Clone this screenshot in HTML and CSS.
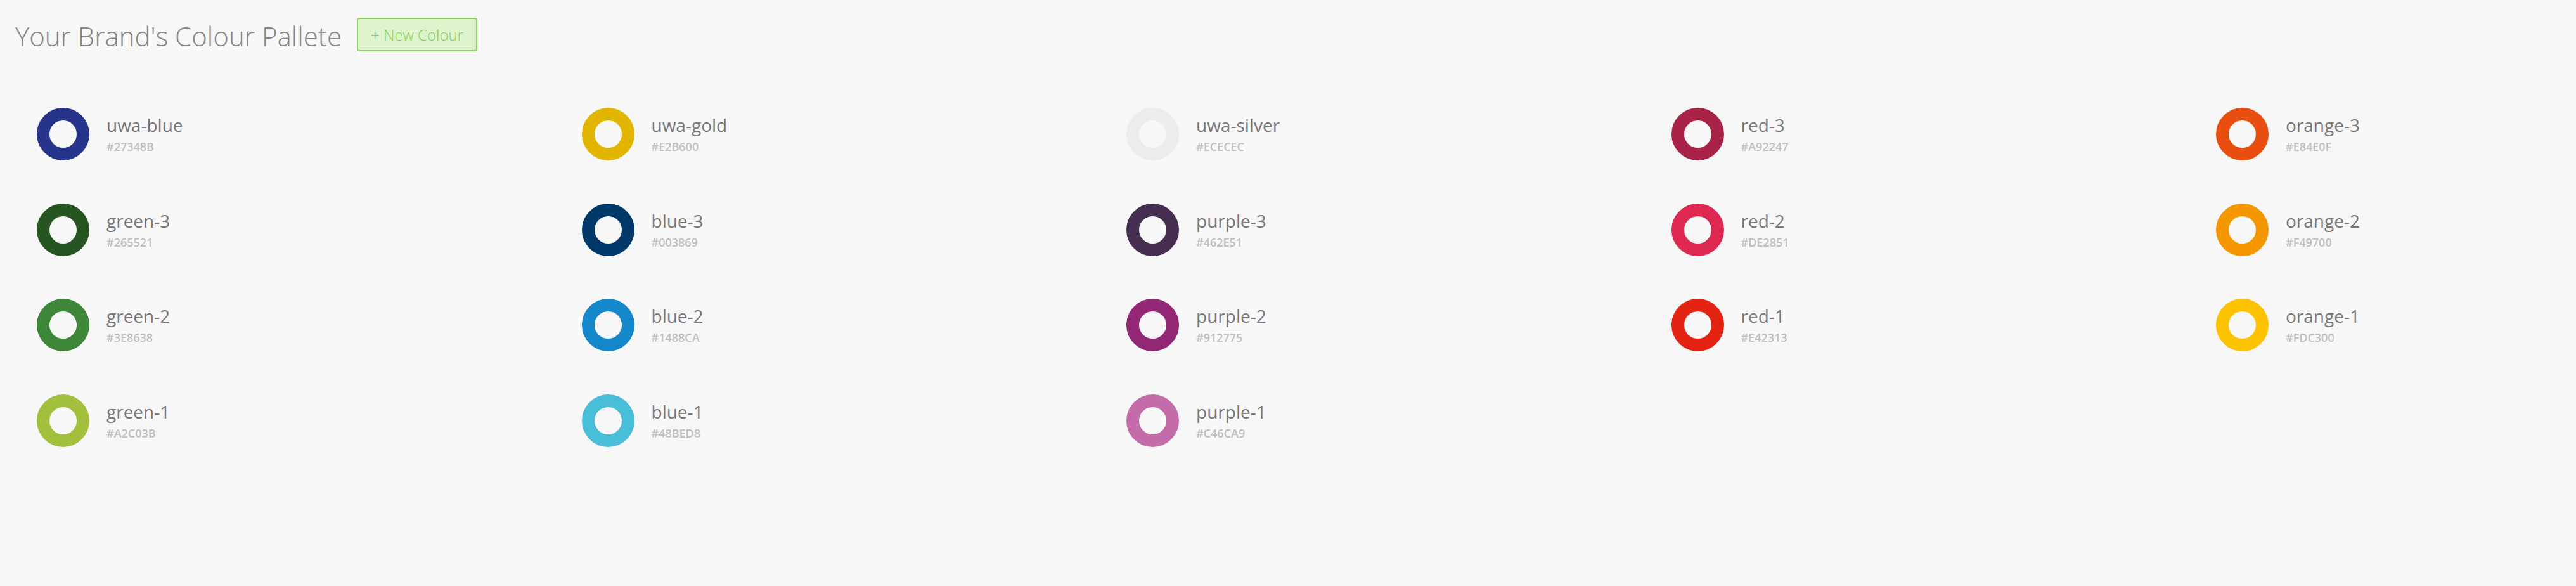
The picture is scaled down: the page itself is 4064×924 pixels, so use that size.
FILE: index.html
```html
<!DOCTYPE html>
<html lang="en">
<head>
<meta charset="utf-8">
<title>Your Brand's Colour Pallete</title>
<link rel="stylesheet" href="styles.css">
</head>
<body>
<header class="header">
  <h1 class="title">Your Brand's Colour Pallete</h1>
  <button class="new-btn" type="button">+ New Colour</button>
</header>
<main class="palette">
  <div class="col">
    <div class="swatch"><span class="ring" style="border-color:#27348B"></span><div class="info"><div class="name">uwa-blue</div><div class="hex">#27348B</div></div></div>
    <div class="swatch"><span class="ring" style="border-color:#265521"></span><div class="info"><div class="name">green-3</div><div class="hex">#265521</div></div></div>
    <div class="swatch"><span class="ring" style="border-color:#3E8638"></span><div class="info"><div class="name">green-2</div><div class="hex">#3E8638</div></div></div>
    <div class="swatch"><span class="ring" style="border-color:#A2C03B"></span><div class="info"><div class="name">green-1</div><div class="hex">#A2C03B</div></div></div>
  </div>
  <div class="col">
    <div class="swatch"><span class="ring" style="border-color:#E2B600"></span><div class="info"><div class="name">uwa-gold</div><div class="hex">#E2B600</div></div></div>
    <div class="swatch"><span class="ring" style="border-color:#003869"></span><div class="info"><div class="name">blue-3</div><div class="hex">#003869</div></div></div>
    <div class="swatch"><span class="ring" style="border-color:#1488CA"></span><div class="info"><div class="name">blue-2</div><div class="hex">#1488CA</div></div></div>
    <div class="swatch"><span class="ring" style="border-color:#48BED8"></span><div class="info"><div class="name">blue-1</div><div class="hex">#48BED8</div></div></div>
  </div>
  <div class="col">
    <div class="swatch"><span class="ring" style="border-color:#ECECEC"></span><div class="info"><div class="name">uwa-silver</div><div class="hex">#ECECEC</div></div></div>
    <div class="swatch"><span class="ring" style="border-color:#462E51"></span><div class="info"><div class="name">purple-3</div><div class="hex">#462E51</div></div></div>
    <div class="swatch"><span class="ring" style="border-color:#912775"></span><div class="info"><div class="name">purple-2</div><div class="hex">#912775</div></div></div>
    <div class="swatch"><span class="ring" style="border-color:#C46CA9"></span><div class="info"><div class="name">purple-1</div><div class="hex">#C46CA9</div></div></div>
  </div>
  <div class="col">
    <div class="swatch"><span class="ring" style="border-color:#A92247"></span><div class="info"><div class="name">red-3</div><div class="hex">#A92247</div></div></div>
    <div class="swatch"><span class="ring" style="border-color:#DE2851"></span><div class="info"><div class="name">red-2</div><div class="hex">#DE2851</div></div></div>
    <div class="swatch"><span class="ring" style="border-color:#E42313"></span><div class="info"><div class="name">red-1</div><div class="hex">#E42313</div></div></div>
  </div>
  <div class="col">
    <div class="swatch"><span class="ring" style="border-color:#E84E0F"></span><div class="info"><div class="name">orange-3</div><div class="hex">#E84E0F</div></div></div>
    <div class="swatch"><span class="ring" style="border-color:#F49700"></span><div class="info"><div class="name">orange-2</div><div class="hex">#F49700</div></div></div>
    <div class="swatch"><span class="ring" style="border-color:#FDC300"></span><div class="info"><div class="name">orange-1</div><div class="hex">#FDC300</div></div></div>
  </div>
</main>
</body>
</html>
```

FILE: styles.css
```css
html, body {
  margin: 0;
  padding: 0;
  background: #f7f7f7;
  overflow: hidden;
}
body {
  font-family: "Open Sans", "Noto Sans", sans-serif;
  width: 4064px;
  height: 924px;
}
.header {
  display: flex;
  align-items: center;
  padding: 28px 0 0 24px;
  height: 53px;
}
.title {
  margin: 0;
  font-weight: 300;
  font-size: 42px;
  line-height: 53px;
  color: #858585;
  white-space: nowrap;
  position: relative;
  top: 2px;
}
.new-btn {
  margin-left: 24px;
  height: 53px;
  padding: 0 20px;
  border: 2px solid #8fd462;
  border-radius: 4px;
  background: #def4cc;
  color: #86cc57;
  font-family: "Open Sans", sans-serif;
  font-weight: 300;
  font-size: 24px;
  line-height: 1;
  box-sizing: border-box;
  white-space: nowrap;
}
.palette {
  display: grid;
  grid-template-columns: repeat(4, 859.5px) 1fr;
  padding: 89px 0 0 58px;
}
.col {
  display: flex;
  flex-direction: column;
}
.swatch {
  display: flex;
  align-items: flex-start;
  height: 150.5px;
}
.ring {
  width: 83px;
  height: 83px;
  border: 20px solid #ccc;
  border-radius: 50%;
  box-sizing: border-box;
  flex: none;
}
.info {
  margin-left: 27px;
  padding-top: 12px;
}
.name {
  font-size: 28px;
  line-height: 30px;
  color: #777;
}
.hex {
  margin-top: 7px;
  font-size: 18px;
  line-height: 24px;
  font-weight: 600;
  color: #bfbfbf;
}
```
